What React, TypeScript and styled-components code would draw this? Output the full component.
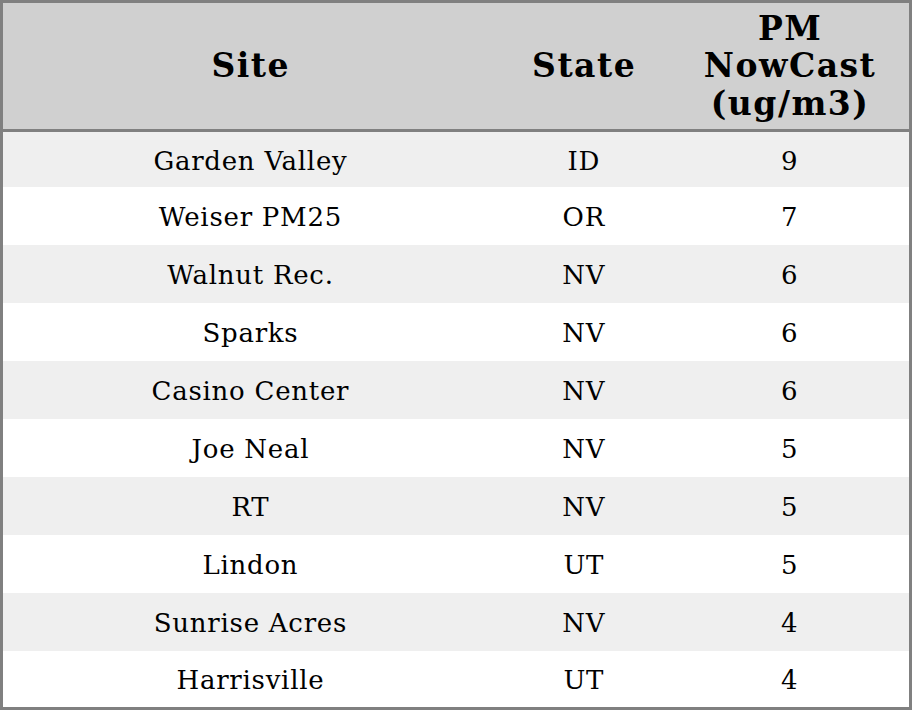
import React from 'react';
import styled, { createGlobalStyle } from 'styled-components';

const GlobalStyle = createGlobalStyle`
    body {
        margin: 0;
        background: #ffffff;
        font-family: 'DejaVu Serif', serif;
    }
`;

const rows = [
    { site: 'Garden Valley', state: 'ID', pm: 9 },
    { site: 'Weiser PM25', state: 'OR', pm: 7 },
    { site: 'Walnut Rec.', state: 'NV', pm: 6 },
    { site: 'Sparks', state: 'NV', pm: 6 },
    { site: 'Casino Center', state: 'NV', pm: 6 },
    { site: 'Joe Neal', state: 'NV', pm: 5 },
    { site: 'RT', state: 'NV', pm: 5 },
    { site: 'Lindon', state: 'UT', pm: 5 },
    { site: 'Sunrise Acres', state: 'NV', pm: 4 },
    { site: 'Harrisville', state: 'UT', pm: 4 },
];

const App = () => {
    return (
        <>
            <GlobalStyle />
            <Table>
                <colgroup>
                    <col style={{ width: 494 }} />
                    <col style={{ width: 172 }} />
                    <col style={{ width: 240 }} />
                </colgroup>
                <thead>
                    <tr>
                        <Head>Site</Head>
                        <Head>State</Head>
                        <Head>
                            PM
                            <br />
                            NowCast
                            <br />
                            (ug/m3)
                        </Head>
                    </tr>
                </thead>
                <tbody>
                    {rows.map((r, i) => (
                        <Row key={r.site} $striped={i % 2 === 0} $first={i === 0}>
                            <Cell>{r.site}</Cell>
                            <Cell>{r.state}</Cell>
                            <Cell>{r.pm}</Cell>
                        </Row>
                    ))}
                </tbody>
            </Table>
        </>
    );
};

export default App;

const Table = styled.table`
    width: 912px;
    border-collapse: collapse;
    border: 3px solid #808080;
    table-layout: fixed;
    color: #000000;
`;

const Head = styled.th`
    height: 124px;
    padding: 1px 0 1px 1.5px;
    background: #d0d0d0;
    border-bottom: 3px solid #808080;
    font-size: 33px;
    font-weight: bold;
    letter-spacing: 1.5px;
    line-height: 37.5px;
    text-align: center;
    vertical-align: middle;
`;

const Row = styled.tr<{ $striped: boolean; $first: boolean }>`
    height: ${(p) => (p.$first ? 56 : 58)}px;
    background: ${(p) => (p.$striped ? '#efefef' : '#ffffff')};
`;

const Cell = styled.td`
    padding: 3px 0 0 0.75px;
    font-size: 26px;
    letter-spacing: 0.75px;
    text-align: center;
    vertical-align: middle;
`;
